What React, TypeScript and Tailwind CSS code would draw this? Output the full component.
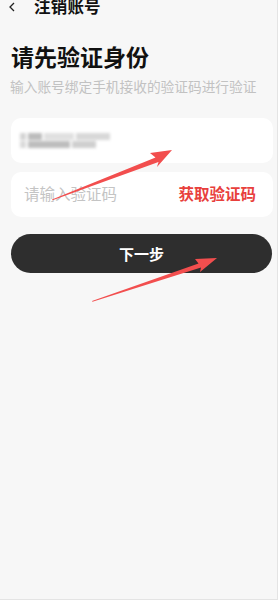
import React from "react";

const font = { fontFamily: '"Noto Sans CJK SC", "Noto Sans", sans-serif' };

function Arrows() {
  // red annotation arrows drawn over the form
  return (
    <svg
      className="absolute inset-0 pointer-events-none"
      width={278}
      height={600}
      viewBox="0 0 278 600"
    >
      <polygon
        fill="#f24e4e"
        points="52,199.5 155.5,157.5 150,153 172,150 157,167 158.5,162 52.5,200.3"
      />
      <polygon
        fill="#f24e4e"
        points="92,301 198.5,263.5 195,259 217,258 200,272 201,267.5 92.5,301.8"
      />
    </svg>
  );
}

export default function App() {
  return (
    <div
      className="relative w-[278px] h-[600px] overflow-hidden bg-[#f7f7f7] border-r border-b border-[#e4e4e4]"
      style={font}
    >
      {/* header */}
      <div className="flex items-center h-[16px] -mt-[2px]">
        <svg width="8" height="10" viewBox="0 0 8 10" className="ml-[8px] mt-[2px]">
          <path d="M6 1 L2 5 L6 9" fill="none" stroke="#222" strokeWidth="1.3" />
        </svg>
        <span className="ml-[18px] text-[16.5px] leading-none font-bold text-[#111] tracking-[0.2px]">
          注销账号
        </span>
      </div>

      <div className="pl-[11px] pr-[4px]">
        <h1 className="mt-[31px] text-[23px] leading-none font-bold text-[#111]">
          请先验证身份
        </h1>
        <p className="mt-[12px] -ml-[1px] text-[13.7px] leading-none text-[#c2c2c2]">
          输入账号绑定手机接收的验证码进行验证
        </p>

        {/* account */}
        <div className="mt-[24px] h-[45px] rounded-[10px] bg-white flex items-center pl-[9px]">
          <div className="flex flex-col gap-[1px] blur-[1.5px]">
            <div className="flex gap-[2px]">
              <div className="w-[6px] h-[7px] bg-[#d4d4d4]" />
              <div className="w-[14px] h-[7px] bg-[#bcbcbc]" />
              <div className="w-[30px] h-[7px] bg-[#e0e0e0]" />
              <div className="w-[34px] h-[7px] bg-[#d8d8d8]" />
            </div>
            <div className="flex gap-[2px]">
              <div className="w-[6px] h-[7px] bg-[#dadada]" />
              <div className="w-[42px] h-[7px] bg-[#bdbdbd]" />
              <div className="w-[24px] h-[7px] bg-[#cfcfcf]" />
            </div>
          </div>
        </div>

        {/* code */}
        <div className="mt-[9px] h-[45px] rounded-[10px] bg-white flex items-center justify-between pl-[13px] pr-[17px]">
          <span className="text-[15.5px] leading-none text-[#c4c4c4]">请输入验证码</span>
          <span className="text-[15.5px] leading-none font-bold text-[#e8403c]">获取验证码</span>
        </div>

        <button className="mt-[17px] w-[261px] h-[39px] rounded-full bg-[#2e2e2e] text-white text-[15px] font-bold leading-none flex items-center justify-center">
          下一步
        </button>
      </div>

      <Arrows />
    </div>
  );
}
